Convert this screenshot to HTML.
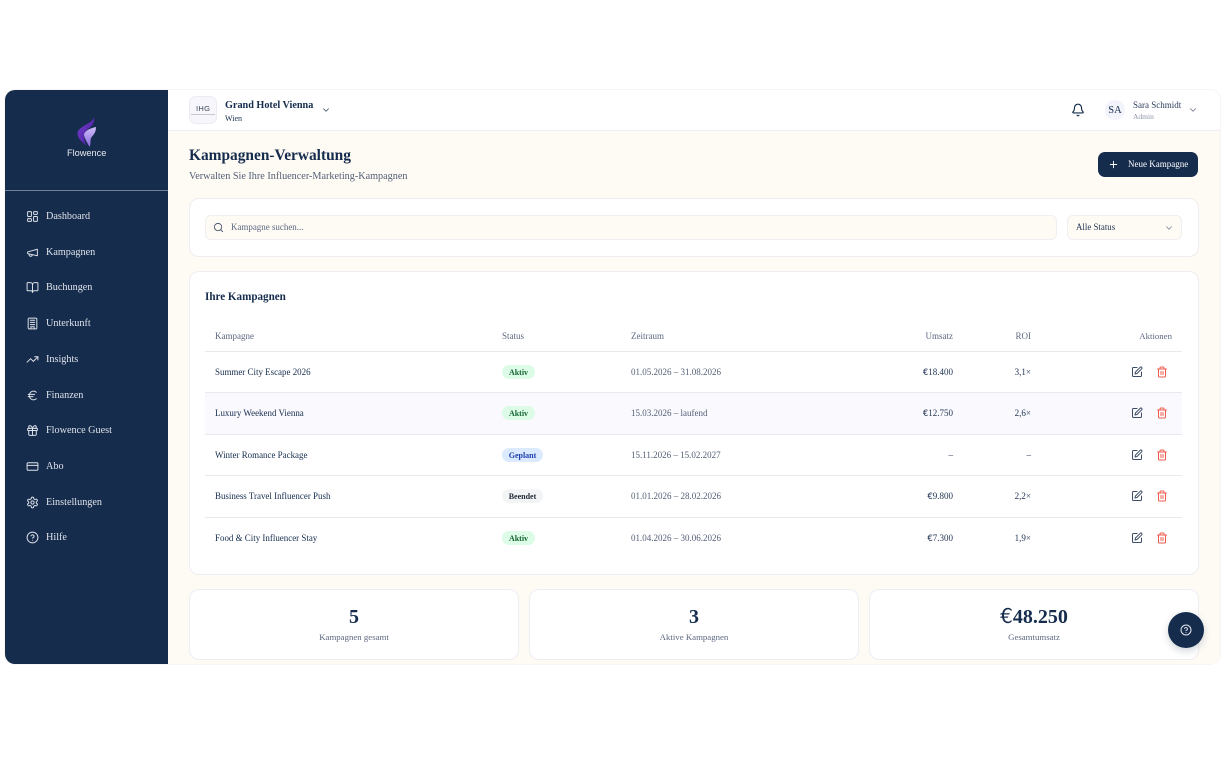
<!DOCTYPE html>
<html lang="de"><head><meta charset="utf-8"><title>Kampagnen-Verwaltung</title>
<style>
*{box-sizing:border-box;margin:0;padding:0}
html,body{width:1224px;height:768px;background:#fff;overflow:hidden;font-family:"Liberation Serif",serif;color:#152c4d}
#w{position:absolute;left:0;top:0;width:1224px;height:768px;filter:blur(.3px)}
.a{position:absolute}
.t{position:absolute;white-space:nowrap;line-height:14px}
.app{position:absolute;left:5px;top:90px;width:1215px;height:574px;background:#fefbf5;border-radius:10px;overflow:hidden;box-shadow:0 0 0 1px #f7f5f1}
.card{position:absolute;background:#fff;border:1px solid #eeedf1;border-radius:10px}
.nav{position:absolute;left:46px;font-size:10.2px;color:#dfe3ea;line-height:14px;white-space:nowrap}
.ni{position:absolute;left:25.500px;width:13px;height:13px;margin-top:.5px;fill:none;stroke:#dfe3ea;stroke-width:1.8;stroke-linecap:round;stroke-linejoin:round}
.rowline{position:absolute;left:205px;width:977px;height:1px;background:#e9e9ee}
.th{position:absolute;font-size:9px;color:#5c6880;line-height:14px;white-space:nowrap}
.n{position:absolute;left:215px;font-size:8.95px;color:#152c4d;line-height:14px;white-space:nowrap}
.d{position:absolute;left:631px;font-size:9px;color:#525e75;line-height:14px;white-space:nowrap}
.u{position:absolute;right:271px;font-size:9px;color:#1f3352;line-height:14px;white-space:nowrap}
.r{position:absolute;right:193px;font-size:9px;color:#1f3352;line-height:14px;white-space:nowrap}
.b{position:absolute;left:502px;height:14px;border-radius:7px;font-size:8px;font-weight:bold;line-height:15px;text-align:center}
.g{width:33px;background:#dcfce7;color:#166534}
.p{width:41px;background:#dbeafe;color:#1e40af}
.e{width:41px;background:#f3f4f6;color:#1f2937}
.ic{position:absolute;width:12px;height:12px;fill:none;stroke-width:2;stroke-linecap:round;stroke-linejoin:round}
.ed{left:1131px;stroke:#3d4c66}
.de{left:1156px;stroke:#ef5a4c}
.num{position:absolute;text-align:center;font-weight:bold;font-size:20px;line-height:24px;color:#152c4d}
.lab{position:absolute;text-align:center;font-size:8.8px;line-height:14px;color:#5c6880}
.eu{font-family:"DejaVu Sans",sans-serif;font-weight:normal}
</style></head><body><div id="w">
<div class="app"></div>
<div class="a" style="left:5px;top:90px;width:163px;height:574px;background:#152c4d;border-radius:10px 0 0 10px"></div>
<div class="a" style="left:5px;top:190px;width:163px;height:1px;background:#6f7f98"></div>
<div class="a" style="left:168px;top:90px;width:1052px;height:41px;background:#fff;border-bottom:1px solid #efeef2;border-radius:0 10px 0 0"></div>

<svg class="a" style="left:76px;top:116px" width="21" height="32" viewBox="0 0 21 32">
<defs><linearGradient id="l1" x1="0" y1="0" x2="1" y2="1"><stop offset="0" stop-color="#7a3fd0"/><stop offset="1" stop-color="#3f1b94"/></linearGradient>
<linearGradient id="l2" x1="0" y1="0" x2="0" y2="1"><stop offset="0" stop-color="#cdbdf7"/><stop offset="1" stop-color="#8a68e0"/></linearGradient></defs>
<path d="M18 1C17 7 6 9 2 15C0 20 4 25 11 30C7 24 7 17 12 13C16 10 19 7 18 1Z" fill="url(#l1)"/>
<path d="M20 11C15 12 10 14 8 18C8 22 11 26 13.500 31C15 28 14 25 15 22C17 19 20 17 20 11Z" fill="url(#l2)"/>
</svg>
<div class="t" style="left:67px;top:146px;font-family:'Liberation Sans',sans-serif;font-size:9.2px;color:#e6e9ef">Flowence</div>

<svg class="ni" style="top:209px" viewBox="0 0 24 24"><rect x="3" y="3" width="7" height="9" rx="1"/><rect x="14" y="3" width="7" height="5" rx="1"/><rect x="14" y="12" width="7" height="9" rx="1"/><rect x="3" y="16" width="7" height="5" rx="1"/></svg>
<div class="nav" style="top:210px">Dashboard</div>
<svg class="ni" style="top:245px" viewBox="0 0 24 24"><path d="M3 11l18-5v12L3 14z"/><path d="M11.600 16.800a3 3 0 1 1-5.800-1.600"/></svg>
<div class="nav" style="top:246px">Kampagnen</div>
<svg class="ni" style="top:280px" viewBox="0 0 24 24"><path d="M12 7v14"/><path d="M3 18a1 1 0 0 1-1-1V4a1 1 0 0 1 1-1h5a4 4 0 0 1 4 4 4 4 0 0 1 4-4h5a1 1 0 0 1 1 1v13a1 1 0 0 1-1 1h-6a3 3 0 0 0-3 3 3 3 0 0 0-3-3z"/></svg>
<div class="nav" style="top:281px">Buchungen</div>
<svg class="ni" style="top:316px" viewBox="0 0 24 24"><rect x="4" y="2" width="16" height="20" rx="2"/><path d="M9 22v-4h6v4M8 6h8M8 10h8M8 14h8"/></svg>
<div class="nav" style="top:317px">Unterkunft</div>
<svg class="ni" style="top:352px" viewBox="0 0 24 24"><path d="M22 7l-8.500 8.500-5-5L2 17"/><path d="M16 7h6v6"/></svg>
<div class="nav" style="top:353px">Insights</div>
<svg class="ni" style="top:388px" viewBox="0 0 24 24"><path d="M4 10h12M4 14h9M19 6a7.700 7.700 0 0 0-5.200-2A7.900 7.900 0 0 0 6 12c0 4.400 3.500 8 7.800 8 2 0 3.800-.8 5.200-2"/></svg>
<div class="nav" style="top:389px">Finanzen</div>
<svg class="ni" style="top:423px" viewBox="0 0 24 24"><rect x="3" y="8" width="18" height="4" rx="1"/><path d="M12 8v13M19 12v7a2 2 0 0 1-2 2H7a2 2 0 0 1-2-2v-7M7.500 8a2.500 2.500 0 0 1 0-5C10 3 12 8 12 8s2-5 4.500-5a2.500 2.500 0 0 1 0 5"/></svg>
<div class="nav" style="top:424px">Flowence Guest</div>
<svg class="ni" style="top:459px" viewBox="0 0 24 24"><rect x="2" y="5" width="20" height="14" rx="2"/><path d="M2 10h20"/></svg>
<div class="nav" style="top:460px">Abo</div>
<svg class="ni" style="top:495px" viewBox="0 0 24 24"><path d="M12.200 2h-.4a2 2 0 0 0-2 2v.2a2 2 0 0 1-1 1.700l-.4.300a2 2 0 0 1-2 0l-.2-.1a2 2 0 0 0-2.700.7l-.2.400a2 2 0 0 0 .7 2.700l.2.100a2 2 0 0 1 1 1.700v.5a2 2 0 0 1-1 1.700l-.2.100a2 2 0 0 0-.7 2.700l.2.400a2 2 0 0 0 2.700.7l.2-.1a2 2 0 0 1 2 0l.4.300a2 2 0 0 1 1 1.700v.2a2 2 0 0 0 2 2h.4a2 2 0 0 0 2-2v-.2a2 2 0 0 1 1-1.700l.4-.300a2 2 0 0 1 2 0l.2.100a2 2 0 0 0 2.700-.7l.2-.4a2 2 0 0 0-.7-2.700l-.2-.1a2 2 0 0 1-1-1.700v-.5a2 2 0 0 1 1-1.700l.2-.1a2 2 0 0 0 .7-2.700l-.2-.4a2 2 0 0 0-2.700-.7l-.2.100a2 2 0 0 1-2 0l-.4-.300a2 2 0 0 1-1-1.700V4a2 2 0 0 0-2-2z"/><circle cx="12" cy="12" r="3"/></svg>
<div class="nav" style="top:496px">Einstellungen</div>
<svg class="ni" style="top:530px" viewBox="0 0 24 24"><circle cx="12" cy="12" r="10"/><path d="M9.100 9a3 3 0 0 1 5.800 1c0 2-3 3-3 3M12 17h.01"/></svg>
<div class="nav" style="top:531px">Hilfe</div>

<div class="a" style="left:189px;top:96px;width:28px;height:28px;background:#f6f6fc;border:1px solid #ecebf3;border-radius:7px"></div>
<div class="t" style="left:196px;top:102px;font-family:'Liberation Sans',sans-serif;font-size:7.500px;color:#3c4658;letter-spacing:.3px">IHG</div>
<div class="a" style="left:191px;top:114px;width:24px;height:1px;background:#c4c6d0"></div>
<div class="t" style="left:225px;top:99px;font-size:10.200px;font-weight:bold">Grand Hotel Vienna</div>
<div class="t" style="left:225px;top:112px;font-size:8px;color:#152c4d">Wien</div>
<svg class="a" style="left:321px;top:105px;fill:none;stroke:#3d4c66;stroke-width:2;stroke-linecap:round;stroke-linejoin:round" width="10" height="10" viewBox="0 0 24 24"><path d="M6 9l6 6 6-6"/></svg>

<svg class="a" style="left:1071px;top:103px;fill:none;stroke:#152c4d;stroke-width:2;stroke-linecap:round;stroke-linejoin:round" width="14" height="14" viewBox="0 0 24 24"><path d="M10.300 21a2 2 0 0 0 3.400 0M3.300 15.300A1 1 0 0 0 4 17h16a1 1 0 0 0 .7-1.700C19.400 14 18 12.500 18 8A6 6 0 0 0 6 8c0 4.500-1.400 6-2.700 7.300"/></svg>
<div class="a" style="left:1105px;top:100px;width:20px;height:20px;border-radius:50%;background:#f3f3fc"></div>
<div class="t" style="left:1105px;top:104px;width:20px;text-align:center;font-size:10.500px;color:#152c4d">SA</div>
<div class="t" style="left:1133px;top:98px;font-size:9px;color:#2c3d5a">Sara Schmidt</div>
<div class="t" style="left:1133px;top:110px;font-size:7.500px;color:#8a93a5">Admin</div>
<svg class="a" style="left:1188px;top:105px;fill:none;stroke:#6a7588;stroke-width:2;stroke-linecap:round;stroke-linejoin:round" width="10" height="10" viewBox="0 0 24 24"><path d="M6 9l6 6 6-6"/></svg>

<div class="t" style="left:189px;top:147px;font-size:15.400px;line-height:18px;font-weight:bold">Kampagnen-Verwaltung</div>
<div class="t" style="left:189px;top:170px;font-size:10.200px;color:#525e75">Verwalten Sie Ihre Influencer-Marketing-Kampagnen</div>

<div class="a" style="left:1098px;top:152px;width:100px;height:25px;background:#152c4d;border-radius:7px"></div>
<svg class="a" style="left:1108px;top:159px;fill:none;stroke:#fff;stroke-width:2;stroke-linecap:round" width="11" height="11" viewBox="0 0 24 24"><path d="M5 12h14M12 5v14"/></svg>
<div class="t" style="left:1128px;top:157px;font-size:9px;color:#fff">Neue Kampagne</div>

<div class="card" style="left:189px;top:198px;width:1010px;height:59px"></div>
<div class="a" style="left:205px;top:215px;width:852px;height:25px;background:#fefbf5;border:1px solid #efeef0;border-radius:6px"></div>
<svg class="a" style="left:212.500px;top:222px;fill:none;stroke:#4c5970;stroke-width:2;stroke-linecap:round" width="11" height="11" viewBox="0 0 24 24"><circle cx="11" cy="11" r="8"/><path d="M21 21l-4.300-4.300"/></svg>
<div class="t" style="left:231px;top:220px;font-size:8.950px;color:#5c6880">Kampagne suchen...</div>
<div class="a" style="left:1067px;top:215px;width:115px;height:25px;background:#fefbf5;border:1px solid #efeef0;border-radius:6px"></div>
<div class="t" style="left:1076px;top:220px;font-size:8.900px;color:#1f3352">Alle Status</div>
<svg class="a" style="left:1164px;top:223px;fill:none;stroke:#7a8496;stroke-width:2;stroke-linecap:round;stroke-linejoin:round" width="10" height="10" viewBox="0 0 24 24"><path d="M6 9l6 6 6-6"/></svg>

<div class="card" style="left:189px;top:271px;width:1010px;height:304px"></div>
<div class="t" style="left:205px;top:290px;font-size:11.100px;font-weight:bold">Ihre Kampagnen</div>

<div class="th" style="left:215px;top:329px">Kampagne</div>
<div class="th" style="left:502px;top:329px">Status</div>
<div class="th" style="left:631px;top:329px">Zeitraum</div>
<div class="th" style="right:271px;top:329px">Umsatz</div>
<div class="th" style="right:193px;top:329px">ROI</div>
<div class="th" style="right:52px;top:329px;font-size:8.800px">Aktionen</div>
<div class="rowline" style="top:351px"></div>
<div class="a" style="left:205px;top:393px;width:977px;height:41px;background:#f9f9fe"></div>
<div class="rowline" style="top:392px"></div>
<div class="rowline" style="top:434px"></div>
<div class="rowline" style="top:475px"></div>
<div class="rowline" style="top:517px"></div>

<div class="n" style="top:365px">Summer City Escape 2026</div>
<div class="b g" style="top:365px">Aktiv</div>
<div class="d" style="top:365px">01.05.2026 – 31.08.2026</div>
<div class="u" style="top:365px"><span class="eu" style="font-size:8.500px">€</span>18.400</div>
<div class="r" style="top:365px">3,1×</div>
<svg class="ic ed" style="top:366px" viewBox="0 0 24 24"><path d="M12 3H5a2 2 0 0 0-2 2v14a2 2 0 0 0 2 2h14a2 2 0 0 0 2-2v-7"/><path d="M18.400 2.600a2.100 2.100 0 1 1 3 3L12 15l-4 1 1-4z"/></svg>
<svg class="ic de" style="top:366px" viewBox="0 0 24 24"><path d="M3 6h18M19 6v14a2 2 0 0 1-2 2H7a2 2 0 0 1-2-2V6M8 6V4a2 2 0 0 1 2-2h4a2 2 0 0 1 2 2v2M10 11v6M14 11v6"/></svg>

<div class="n" style="top:406px">Luxury Weekend Vienna</div>
<div class="b g" style="top:406.400px">Aktiv</div>
<div class="d" style="top:406px">15.03.2026 – laufend</div>
<div class="u" style="top:406px"><span class="eu" style="font-size:8.500px">€</span>12.750</div>
<div class="r" style="top:406px">2,6×</div>
<svg class="ic ed" style="top:407px" viewBox="0 0 24 24"><path d="M12 3H5a2 2 0 0 0-2 2v14a2 2 0 0 0 2 2h14a2 2 0 0 0 2-2v-7"/><path d="M18.400 2.600a2.100 2.100 0 1 1 3 3L12 15l-4 1 1-4z"/></svg>
<svg class="ic de" style="top:407px" viewBox="0 0 24 24"><path d="M3 6h18M19 6v14a2 2 0 0 1-2 2H7a2 2 0 0 1-2-2V6M8 6V4a2 2 0 0 1 2-2h4a2 2 0 0 1 2 2v2M10 11v6M14 11v6"/></svg>

<div class="n" style="top:448px">Winter Romance Package</div>
<div class="b p" style="top:448px">Geplant</div>
<div class="d" style="top:448px">15.11.2026 – 15.02.2027</div>
<div class="u" style="top:448px">–</div>
<div class="r" style="top:448px">–</div>
<svg class="ic ed" style="top:449px" viewBox="0 0 24 24"><path d="M12 3H5a2 2 0 0 0-2 2v14a2 2 0 0 0 2 2h14a2 2 0 0 0 2-2v-7"/><path d="M18.400 2.600a2.100 2.100 0 1 1 3 3L12 15l-4 1 1-4z"/></svg>
<svg class="ic de" style="top:449px" viewBox="0 0 24 24"><path d="M3 6h18M19 6v14a2 2 0 0 1-2 2H7a2 2 0 0 1-2-2V6M8 6V4a2 2 0 0 1 2-2h4a2 2 0 0 1 2 2v2M10 11v6M14 11v6"/></svg>

<div class="n" style="top:489px">Business Travel Influencer Push</div>
<div class="b e" style="top:489.400px">Beendet</div>
<div class="d" style="top:489px">01.01.2026 – 28.02.2026</div>
<div class="u" style="top:489px"><span class="eu" style="font-size:8.500px">€</span>9.800</div>
<div class="r" style="top:489px">2,2×</div>
<svg class="ic ed" style="top:490px" viewBox="0 0 24 24"><path d="M12 3H5a2 2 0 0 0-2 2v14a2 2 0 0 0 2 2h14a2 2 0 0 0 2-2v-7"/><path d="M18.400 2.600a2.100 2.100 0 1 1 3 3L12 15l-4 1 1-4z"/></svg>
<svg class="ic de" style="top:490px" viewBox="0 0 24 24"><path d="M3 6h18M19 6v14a2 2 0 0 1-2 2H7a2 2 0 0 1-2-2V6M8 6V4a2 2 0 0 1 2-2h4a2 2 0 0 1 2 2v2M10 11v6M14 11v6"/></svg>

<div class="n" style="top:531px">Food &amp; City Influencer Stay</div>
<div class="b g" style="top:531px">Aktiv</div>
<div class="d" style="top:531px">01.04.2026 – 30.06.2026</div>
<div class="u" style="top:531px"><span class="eu" style="font-size:8.500px">€</span>7.300</div>
<div class="r" style="top:531px">1,9×</div>
<svg class="ic ed" style="top:532px" viewBox="0 0 24 24"><path d="M12 3H5a2 2 0 0 0-2 2v14a2 2 0 0 0 2 2h14a2 2 0 0 0 2-2v-7"/><path d="M18.400 2.600a2.100 2.100 0 1 1 3 3L12 15l-4 1 1-4z"/></svg>
<svg class="ic de" style="top:532px" viewBox="0 0 24 24"><path d="M3 6h18M19 6v14a2 2 0 0 1-2 2H7a2 2 0 0 1-2-2V6M8 6V4a2 2 0 0 1 2-2h4a2 2 0 0 1 2 2v2M10 11v6M14 11v6"/></svg>

<div class="card" style="left:189px;top:589px;width:330px;height:71px"></div>
<div class="card" style="left:529px;top:589px;width:330px;height:71px"></div>
<div class="card" style="left:869px;top:589px;width:330px;height:71px"></div>
<div class="num" style="left:189px;top:605px;width:330px">5</div>
<div class="num" style="left:529px;top:605px;width:330px">3</div>
<div class="num" style="left:869px;top:604px;width:330px"><span class="eu">€</span>48.250</div>
<div class="lab" style="left:189px;top:630px;width:330px">Kampagnen gesamt</div>
<div class="lab" style="left:529px;top:630px;width:330px">Aktive Kampagnen</div>
<div class="lab" style="left:869px;top:630px;width:330px">Gesamtumsatz</div>

<div class="a" style="left:1168px;top:612px;width:36px;height:36px;border-radius:50%;background:#152c4d;box-shadow:0 3px 8px rgba(21,44,77,.2)"></div>
<svg class="a" style="left:1180px;top:624px;fill:none;stroke:#e6e9ef;stroke-width:2;stroke-linecap:round;stroke-linejoin:round" width="12" height="12" viewBox="0 0 24 24"><circle cx="12" cy="12" r="10"/><path d="M9.100 9a3 3 0 0 1 5.800 1c0 2-3 3-3 3M12 17h.01"/></svg>
</div></body></html>
